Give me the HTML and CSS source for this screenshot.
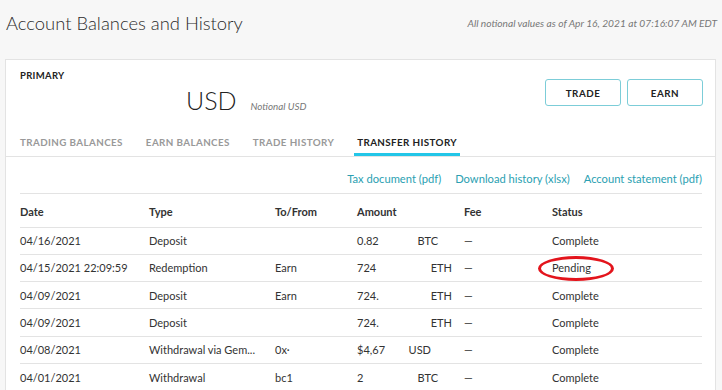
FILE: index.html
```html
<!DOCTYPE html>
<html lang="en">
<head>
    <meta charset="UTF-8">
    <meta name="viewport" content="width=device-width, initial-scale=1.0">
    <title>Account Balances and History</title>
    <link rel="stylesheet" href="styles.css">
</head>
<body>

<header class="page-head">
    <h1>Account Balances and History</h1>
    <p class="asof">All notional values as of Apr 16, 2021 at 07:16:07 AM EDT</p>
</header>

<section class="card">
    <div class="card-top">
        <div class="account">
            <h4>PRIMARY</h4>
            <div class="total">
                <span class="total-cur">USD</span>
                <span class="total-note">Notional USD</span>
            </div>
        </div>
        <div class="actions">
            <button class="btn">TRADE</button>
            <button class="btn">EARN</button>
        </div>
    </div>

    <nav class="tabs">
        <a class="tab">TRADING BALANCES</a>
        <a class="tab">EARN BALANCES</a>
        <a class="tab">TRADE HISTORY</a>
        <a class="tab active">TRANSFER HISTORY</a>
    </nav>

    <div class="links">
        <a href="#">Tax document (pdf)</a>
        <a href="#">Download history (xlsx)</a>
        <a href="#">Account statement (pdf)</a>
    </div>

    <table class="history">
        <thead>
            <tr>
                <th class="c-date">Date</th>
                <th class="c-type">Type</th>
                <th class="c-to">To/From</th>
                <th class="c-amt">Amount</th>
                <th class="c-fee">Fee</th>
                <th>Status</th>
            </tr>
        </thead>
        <tbody>
            <tr>
                <td>04/16/2021</td>
                <td>Deposit</td>
                <td></td>
                <td><div class="amt"><span>0.82</span><span class="cur cur-btc">BTC</span></div></td>
                <td>&mdash;</td>
                <td>Complete</td>
            </tr>
            <tr>
                <td>04/15/2021 22:09:59</td>
                <td>Redemption</td>
                <td>Earn</td>
                <td><div class="amt"><span>724</span><span class="cur cur-eth">ETH</span></div></td>
                <td>&mdash;</td>
                <td class="marked">Pending<span class="circle"></span></td>
            </tr>
            <tr>
                <td>04/09/2021</td>
                <td>Deposit</td>
                <td>Earn</td>
                <td><div class="amt"><span>724.</span><span class="cur cur-eth">ETH</span></div></td>
                <td>&mdash;</td>
                <td>Complete</td>
            </tr>
            <tr>
                <td>04/09/2021</td>
                <td>Deposit</td>
                <td></td>
                <td><div class="amt"><span>724.</span><span class="cur cur-eth">ETH</span></div></td>
                <td>&mdash;</td>
                <td>Complete</td>
            </tr>
            <tr>
                <td>04/08/2021</td>
                <td>Withdrawal via Gem...</td>
                <td>0x&middot;</td>
                <td><div class="amt"><span>$4,67</span><span class="cur cur-usd">USD</span></div></td>
                <td>&mdash;</td>
                <td>Complete</td>
            </tr>
            <tr>
                <td>04/01/2021</td>
                <td>Withdrawal</td>
                <td>bc1</td>
                <td><div class="amt"><span>2</span><span class="cur cur-btc">BTC</span></div></td>
                <td>&mdash;</td>
                <td>Complete</td>
            </tr>
        </tbody>
    </table>
</section>

</body>
</html>
```

FILE: styles.css
```css
*{
    margin: 0;
    padding: 0;
    box-sizing: border-box;
}

body{
    background-color: #f7f7f7;
    font-family: "Lato", "Liberation Sans", sans-serif;
    color: #333;
    overflow: hidden;
}

.page-head{
    display: flex;
    justify-content: space-between;
    align-items: center;
    height: 59px;
    padding: 0 5px 14px 6px;
}

.page-head h1{
    font-size: 18.4px;
    font-weight: 300;
    color: #2b2b2b;
}

.asof{
    font-size: 10.2px;
    font-style: italic;
    color: #777;
}

.card{
    margin: 0 6px 0 5px;
    background-color: white;
    border: 1px solid #e3e3e3;
    height: 340px;
}

.card-top{
    display: flex;
    justify-content: space-between;
    padding: 10px 12px 0 14px;
    height: 72px;
}

.account h4{
    font-size: 9.5px;
    font-weight: 700;
    color: #222;
    letter-spacing: 0.3px;
}

.total{
    display: flex;
    align-items: baseline;
    margin-top: 4px;
    padding-left: 166px;
}

.total-cur{
    font-size: 25px;
    font-weight: 300;
    color: #222;
}

.total-note{
    font-size: 9.8px;
    font-style: italic;
    color: #777;
    margin-left: 14px;
}

.actions{
    display: flex;
    gap: 6px;
    padding-top: 9px;
}

.btn{
    width: 76px;
    height: 27px;
    background-color: white;
    border: 1px solid #7ccdd8;
    border-radius: 3px;
    font-family: inherit;
    font-size: 9.8px;
    font-weight: 700;
    letter-spacing: 0.5px;
    color: #222;
}

.tabs{
    display: flex;
    gap: 17px;
    padding: 0 0 0 11px;
    border-bottom: 1px solid #e3e3e3;
    height: 25px;
}

.tab{
    padding: 4px 3px 0;
    font-size: 9.8px;
    font-weight: 700;
    letter-spacing: 0.4px;
    color: #999;
    border-bottom: 3px solid transparent;
}

.tab.active{
    color: #222;
    border-bottom-color: #23c6e8;
}

.links{
    display: flex;
    justify-content: flex-end;
    gap: 14px;
    margin: 0 13px 0 14px;
    padding: 15px 0 8px;
    border-bottom: 1px solid #e3e3e3;
}

.links a{
    font-size: 11.2px;
    color: #2b9fb2;
    text-decoration: none;
}

.history{
    width: calc(100% - 27px);
    margin-left: 14px;
    border-collapse: collapse;
    font-size: 11px;
    color: #333;
}

.history th{
    text-align: left;
    font-weight: 700;
    height: 33px;
    padding-top: 2px;
    border-bottom: 1px solid #e3e3e3;
}

.history td{
    height: 27.3px;
    border-bottom: 1px solid #e3e3e3;
    white-space: nowrap;
}

.c-date{ width: 129px; }
.c-type{ width: 126px; }
.c-to{ width: 82px; }
.c-amt{ width: 107px; }
.c-fee{ width: 88px; }

.amt{
    display: flex;
}

.cur{
    margin-left: auto;
}

.cur-btc{ padding-right: 26px; }
.cur-eth{ padding-right: 12px; }
.cur-usd{ padding-right: 33px; }

.marked{
    position: relative;
}

.circle{
    position: absolute;
    left: -14px;
    top: 1px;
    width: 76px;
    height: 25px;
    border: 3.5px solid #e3141c;
    border-radius: 50%;
}
```
